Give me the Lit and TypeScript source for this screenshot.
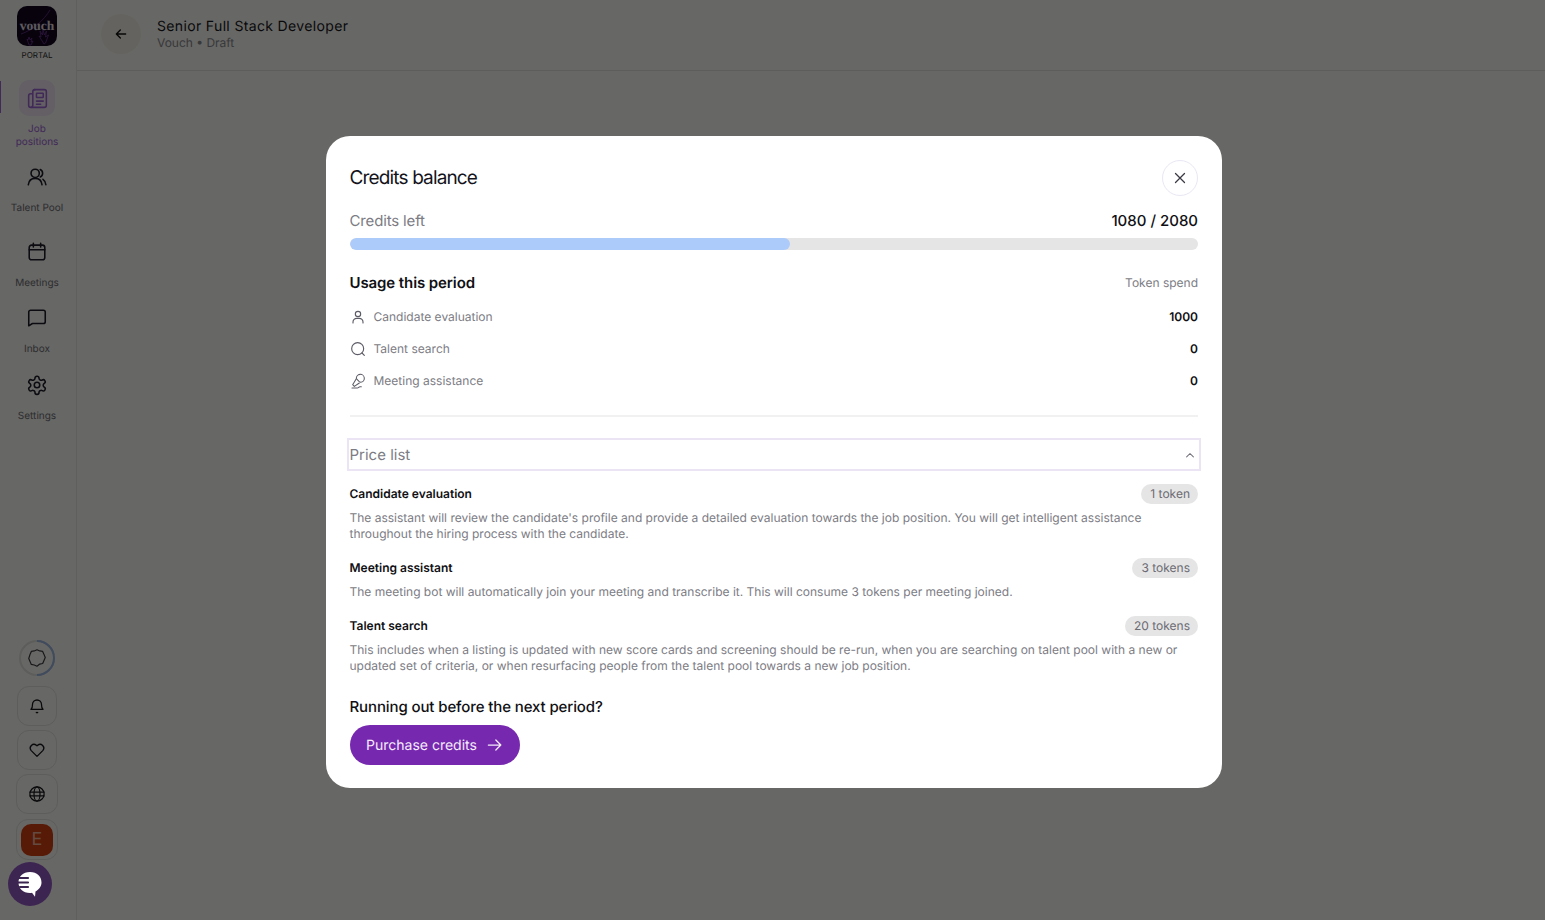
import { LitElement, html, css, svg } from "lit";
import { customElement } from "lit/decorators.js";

const ic = (size: number, body: unknown, sw = 2) => html`<svg width=${size} height=${size} viewBox="0 0 24 24" fill="none" stroke="currentColor" stroke-width=${sw} stroke-linecap="round" stroke-linejoin="round">${body}</svg>`;

@customElement("app-root")
export class AppRoot extends LitElement {
  static styles = css`
    :host { display: block; width: 1545px; height: 920px; position: relative; overflow: hidden; background: #fffffc; font-family: Inter, "Liberation Sans", sans-serif; color: #101014; text-rendering: geometricPrecision; }
    .page { display: flex; height: 920px; }
    .side { width: 74px; padding-right: 2px; flex: none; border-right: 1px solid #ececec; display: flex; flex-direction: column; align-items: center; position: relative; }
    .logo { width: 40px; height: 40px; margin-top: 6px; border-radius: 10px; background: #12041f; display: flex; align-items: center; justify-content: center; overflow: hidden; position: relative; color: #e8e0ee; font-family: "Liberation Serif", serif; font-weight: 700; font-size: 13.5px; flex: none; }
    .logo svg { position: absolute; inset: 0; }
    .logo span { position: relative; top: -.5px; }
    .portal { font-size: 8px; line-height: 10px; margin-top: 4px; color: #2a2a2a; }
    .nav { display: flex; flex-direction: column; align-items: center; width: 100%; margin-top: 20px; }
    .nav-item { display: flex; flex-direction: column; align-items: center; width: 100%; position: relative; font-size: 10px; line-height: 13px; text-align: center; color: #6e6e78; }
    .nav-icon { width: 36px; height: 36px; border-radius: 10px; display: flex; align-items: center; justify-content: center; color: #1b1b2b; margin-bottom: 7px; }
    .nav-item.active { color: #a066dc; }
    .active .nav-icon { background: #f4ecfb; color: #a066dc; }
    .active::before { content: ""; position: absolute; left: 0; top: 1px; width: 1px; height: 32px; background: #a066dc; }
    .talent { margin-top: 10px; }
    .meet { margin-top: 19px; }
    .inbox { margin-top: 10px; }
    .settings { margin-top: 11px; }
    .spacer { flex: 1; }
    .ring { width: 36px; height: 36px; border-radius: 50%; display: flex; align-items: center; justify-content: center; margin-bottom: 10px; position: relative; color: #3a3a44; }
    .ring-arc { position: absolute; inset: 0; }
    .sq { width: 40px; height: 40px; box-sizing: border-box; border: 1px solid #e6e6e6; border-radius: 12px; display: flex; align-items: center; justify-content: center; margin-bottom: 4px; color: #14141c; flex: none; }
    .sq.wide { width: 42px; }
    .sq.user { width: 42px; height: 41px; margin-top: 1px; margin-bottom: 60px; }
    .avatar { width: 32px; height: 32px; border-radius: 10px; background: #d8400f; color: #f6b8a4; font-size: 18px; display: flex; align-items: center; justify-content: center; }
    .chat { position: absolute; left: 8px; top: 862px; width: 44px; height: 44px; border-radius: 50%; display: flex; align-items: center; justify-content: center; background: #3d2552; }
    .main { flex: 1; display: flex; flex-direction: column; }
    .head { height: 70px; border-bottom: 1px solid #e5e5e5; display: flex; align-items: center; padding-left: 24px; gap: 16px; }
    .back { width: 40px; height: 40px; border-radius: 50%; background: #faf6ee; display: flex; align-items: center; justify-content: center; margin-top: -2px; }
    .jt { font-size: 14px; line-height: 20px; letter-spacing: .35px; color: #14141c; }
    .js { font-size: 12px; line-height: 14px; margin-top: -1px; color: #8a8a92; }
    .titles { margin-top: -4px; }
    .overlay { position: absolute; inset: 0; background: rgba(2,1,0,.6); padding: 135.500px 0 0 325.500px; box-sizing: border-box; }
    .modal { width: 896.500px; box-sizing: border-box; background: #fff; border-radius: 24px; padding: 24px 24px 23px; display: flex; flex-direction: column; }
    .mh { display: flex; justify-content: space-between; align-items: center; height: 36px; }
    .mt { font-size: 19px; letter-spacing: -.85px; color: #14141c; }
    .close { width: 36px; height: 36px; box-sizing: border-box; border: 1px solid #e9e7f3; border-radius: 50%; display: flex; align-items: center; justify-content: center; color: #3a3a44; }
    .cr { display: flex; justify-content: space-between; align-items: center; margin-top: 14px; height: 22px; font-size: 15px; }
    .cl { color: #7c7c84; letter-spacing: -.15px; }
    .cv { font-weight: 500; color: #101014; }
    .bar { height: 12px; border-radius: 6px; background: #e5e5e5; margin-top: 6px; overflow: hidden; }
    .fill { height: 100%; background: #adcbfa; border-radius: 6px; }
    .ur { display: flex; justify-content: space-between; align-items: center; margin-top: 22px; height: 22px; }
    .ut { font-size: 15px; font-weight: 600; letter-spacing: -.1px; color: #101014; }
    .us { font-size: 12px; color: #7c7c84; }
    .rows { margin-top: 7px; display: flex; flex-direction: column; }
    .row { display: flex; align-items: center; height: 32px; font-size: 12px; color: #7c7c84; }
    .row svg { margin-right: 8px; flex: none; color: #5c5c66; }
    .row b { margin-left: auto; font-weight: 600; color: #101014; font-size: 12px; }
    hr { border: 0; height: 2px; background: #f1f1f1; margin: 18.500px 0 21px; width: 100%; }
    .pl { margin: 0 -3px; height: 33px; box-sizing: border-box; border: 2px solid #ebe4f5; padding: 0 0 0 1px; display: flex; align-items: center; justify-content: space-between; font-size: 15px; color: #7c7c84; }
    .pl svg { color: #71717a; }
    .items { display: flex; flex-direction: column; gap: 14.500px; margin-top: 11.500px; }
    .it-h { display: flex; justify-content: space-between; align-items: center; height: 22px; }
    .it-t { font-size: 12px; font-weight: 600; color: #101014; }
    .pill { height: 20px; line-height: 20px; border-radius: 10px; background: #e5e5e5; padding: 0 8px 0 9px; font-size: 12px; color: #6b6b73; }
    .it-d { font-size: 12px; line-height: 16px; color: #7c7c84; margin-top: 5.500px; }
    .q { font-size: 15px; font-weight: 500; letter-spacing: -.11px; color: #101014; margin-top: 22px; line-height: 22px; }
    .btn { display: inline-flex; align-self: flex-start; align-items: center; gap: 8px; height: 40px; border-radius: 20px; background: #7628af; color: #f5ecfb; padding: 0 15px 0 16.500px; font-size: 14px; margin-top: 7px; }
  `;

  private price = [
    ["Candidate evaluation", "1 token", "The assistant will review the candidate's profile and provide a detailed evaluation towards the job position. You will get intelligent assistance throughout the hiring process with the candidate."],
    ["Meeting assistant", "3 tokens", "The meeting bot will automatically join your meeting and transcribe it. This will consume 3 tokens per meeting joined."],
    ["Talent search", "20 tokens", "This includes when a listing is updated with new score cards and screening should be re-run, when you are searching on talent pool with a new or updated set of criteria, or when resurfacing people from the talent pool towards a new job position."],
  ];

  render() {
    return html`
      <div class="page">
        <aside class="side">
          <div class="logo">
            <svg width="40" height="40" viewBox="0 0 40 40" fill="none" stroke="#6a3298" stroke-width=".8"><path d="M4 28C16 24 27 14 33 4"/><path d="M27 38l-5-8 2 1-1-6 2.500 4 .5-5 1.500 5 2-4-1 6 3-2-3 8z"/><path d="M12 39l-2-6 1 1 1-3 1 3 2-2-1 4 2-1-2 4z"/></svg>
            <span>vouch</span>
          </div>
          <div class="portal">PORTAL</div>
          <nav class="nav">
            <div class="nav-item active">
              <div class="nav-icon">${ic(25, svg`<path d="M9 3.500h9.500a2 2 0 0 1 2 2v13a2 2 0 0 1-2 2H6"/><path d="M7 7.500H5.500a2 2 0 0 0-2 2v9a2 2 0 0 0 2 2 2 2 0 0 0 2-2V5.500a2 2 0 0 1 2-2"/><rect x="11" y="7" width="6.500" height="4" rx=".5"/><path d="M11 14.500h6.500M11 17.500h4"/>`, 1.5)}</div>
              Job<br />positions
            </div>
            <div class="nav-item talent">
              <div class="nav-icon">${ic(22, svg`<circle cx="10" cy="8" r="4.500"/><path d="M2.500 20.500c.5-4.500 3.500-7 7.500-7s7 2.500 7.500 7"/><path d="M15.500 3.800a4.500 4.500 0 0 1 0 8.200"/><path d="M18.500 14.500c1.800 1.200 3 3.200 3.200 6"/>`, 1.7)}</div>
              Talent Pool
            </div>
            <div class="nav-item meet">
              <div class="nav-icon">${ic(22, svg`<rect x="3.500" y="4.500" width="17" height="16" rx="2.500"/><path d="M3.500 9.500h17M8 2.500v4M16 2.500v4"/>`, 1.7)}</div>
              Meetings
            </div>
            <div class="nav-item inbox">
              <div class="nav-icon">${ic(22, svg`<path d="M5 3.500h14a2 2 0 0 1 2 2v10.500a2 2 0 0 1-2 2H7l-4 2.500V5.500a2 2 0 0 1 2-2z"/>`, 1.7)}</div>
              Inbox
            </div>
            <div class="nav-item settings">
              <div class="nav-icon">${ic(22, svg`<path d="M12.200 2.500h-.4a2 2 0 0 0-2 2v.2a2 2 0 0 1-1 1.700l-.4.200a2 2 0 0 1-2 0l-.2-.1a2 2 0 0 0-2.700.7l-.2.400a2 2 0 0 0 .7 2.700l.2.100a2 2 0 0 1 1 1.700v.5a2 2 0 0 1-1 1.700l-.2.100a2 2 0 0 0-.7 2.700l.2.400a2 2 0 0 0 2.700.7l.2-.1a2 2 0 0 1 2 0l.4.200a2 2 0 0 1 1 1.700v.2a2 2 0 0 0 2 2h.4a2 2 0 0 0 2-2v-.2a2 2 0 0 1 1-1.700l.4-.2a2 2 0 0 1 2 0l.2.100a2 2 0 0 0 2.700-.7l.2-.4a2 2 0 0 0-.7-2.700l-.2-.1a2 2 0 0 1-1-1.700v-.5a2 2 0 0 1 1-1.700l.2-.1a2 2 0 0 0 .7-2.700l-.2-.4a2 2 0 0 0-2.700-.7l-.2.100a2 2 0 0 1-2 0l-.4-.2a2 2 0 0 1-1-1.700v-.2a2 2 0 0 0-2-2z"/><circle cx="12" cy="12" r="3"/>`, 1.7)}</div>
              Settings
            </div>
          </nav>
          <div class="spacer"></div>
          <div class="ring">
            <svg class="ring-arc" width="36" height="36" viewBox="0 0 36 36" fill="none" stroke-width="2"><circle cx="18" cy="18" r="17" stroke="#e6e6e6"/><path d="M18 1A17 17 0 0 1 18 35" stroke="#9db8e8"/></svg>
            ${ic(22, svg`<path d="M12 3l3 1.300 3.200.5 1.300 3 1.500 3.700-1.500 3.500-1.300 3-3.200.6L12 21l-3-1.400-3.200-.6-1.300-3L3 12.500l1.500-4.700 1.300-3L9 4.300z"/>`, 1.3)}
          </div>
          <div class="sq">${ic(18, svg`<path d="M6 10a6 6 0 0 1 12 0c0 5 2 6.500 2 6.500H4S6 15 6 10"/><path d="M11 20.500a1.500 1.500 0 0 0 2 0"/>`, 1.7)}</div>
          <div class="sq">${ic(18, svg`<path d="M12 20.500l-8-8a5 5 0 0 1 7-7l1 1 1-1a5 5 0 0 1 7 7z"/>`, 1.7)}</div>
          <div class="sq wide">${ic(18, svg`<circle cx="12" cy="12" r="9.500"/><ellipse cx="12" cy="12" rx="4" ry="9.500"/><path d="M2.500 9.500h19M2.500 14.500h19"/>`, 1.6)}</div>
          <div class="sq user"><div class="avatar">E</div></div>
        </aside>
        <main class="main">
          <header class="head">
            <div class="back">${ic(16, svg`<path d="M19 12H5M11 6l-6 6 6 6"/>`, 2)}</div>
            <div class="titles">
              <div class="jt">Senior Full Stack Developer</div>
              <div class="js">Vouch • Draft</div>
            </div>
          </header>
        </main>
      </div>
      <div class="overlay">
        <section class="modal">
          <div class="mh">
            <div class="mt">Credits balance</div>
            <div class="close">${ic(18, svg`<path d="M6 6l12 12M18 6L6 18"/>`, 1.7)}</div>
          </div>
          <div class="cr"><span class="cl">Credits left</span><span class="cv">1080 / 2080</span></div>
          <div class="bar"><div class="fill" style="width:${(1080 / 2080 * 100).toFixed(2)}%"></div></div>
          <div class="ur"><span class="ut">Usage this period</span><span class="us">Token spend</span></div>
          <div class="rows">
            <div class="row">${ic(16, svg`<circle cx="12" cy="7.500" r="4"/><path d="M4.500 21v-1.500a5.500 5.500 0 0 1 5.500-5.500h4a5.500 5.500 0 0 1 5.500 5.500V21"/>`, 1.7)}Candidate evaluation<b>1000</b></div>
            <div class="row">${ic(16, svg`<circle cx="11.500" cy="11.500" r="9"/><path d="M18 18l3.500 3.500"/>`, 1.7)}Talent search<b>0</b></div>
            <div class="row">${ic(16, svg`<path d="M12.500 13.500l-4-4A6 6 0 1 1 15 15z" transform="translate(1 -1)"/><path d="M9 9.500l-5 8 2.500 2.500 7.500-5"/><path d="M3 22.500h8c2 0 2-2 4-2h2"/>`, 1.6)}Meeting assistance<b>0</b></div>
          </div>
          <hr />
          <div class="pl">Price list ${ic(18, svg`<path d="M7.500 14.500L12 10l4.500 4.500"/>`, 1.4)}</div>
          <div class="items">
            ${this.price.map(([t, p, d]) => html`
              <div>
                <div class="it-h"><span class="it-t">${t}</span><span class="pill">${p}</span></div>
                <div class="it-d">${d}</div>
              </div>`)}
          </div>
          <div class="q">Running out before the next period?</div>
          <div class="btn">Purchase credits ${ic(20, svg`<path d="M4 12h15M13 6l6 6-6 6"/>`, 1.5)}</div>
        </section>
      </div>
      <div class="chat">
        <svg width="24" height="27" viewBox="0 0 24 27"><path d="M12 1C5 1 .5 5.500.5 11.500S5 22 12 22c.8 0 1.500 0 2-.2l3 4 .500-5.300c3.500-2 6-5 6-9C23.500 5.500 19 1 12 1z" fill="#fff"/><path d="M1 7h9M0 11.500h10M2 16h8" stroke="#3d2552" stroke-width="2.200" stroke-linecap="round"/></svg>
      </div>
    `;
  }
}
